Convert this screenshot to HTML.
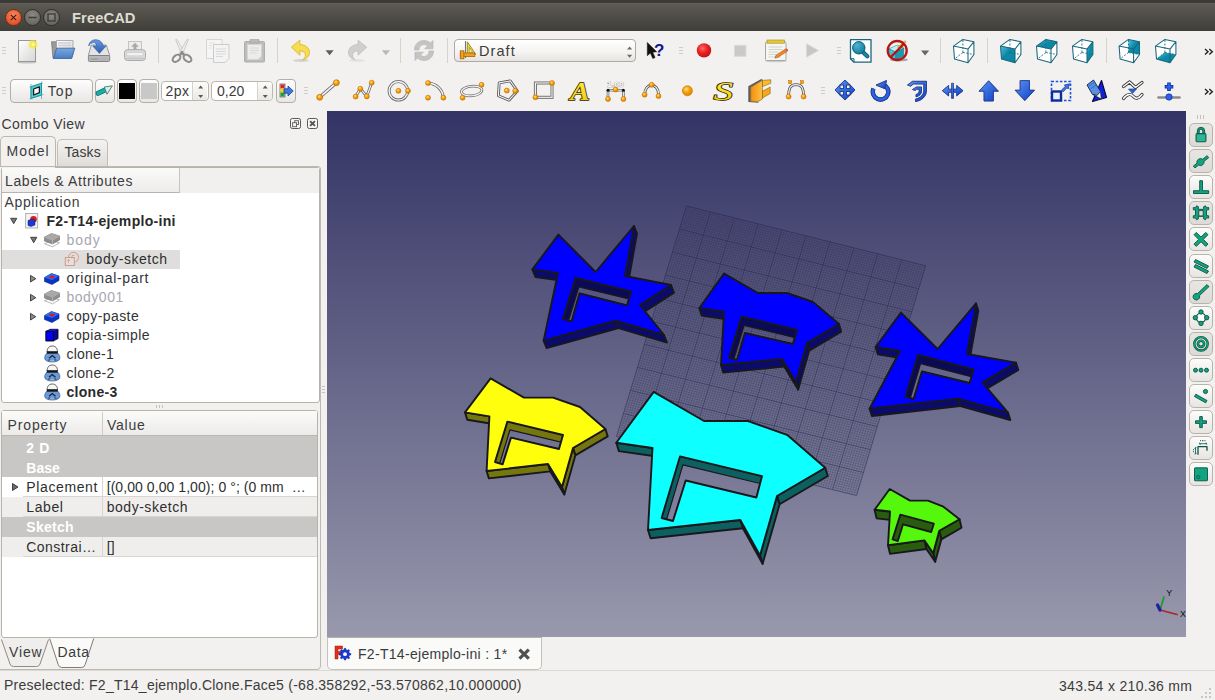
<!DOCTYPE html>
<html lang="en">
<head>
<meta charset="utf-8">
<title>FreeCAD</title>
<style>
*{box-sizing:border-box;margin:0;padding:0}
html,body{width:1215px;height:700px;overflow:hidden;background:#f2f1f0}
body{position:relative;font-family:"Liberation Sans","DejaVu Sans",sans-serif;font-size:14px;color:#3c3c3c}
.abs{position:absolute}
.t{position:absolute;white-space:nowrap;line-height:1}
#titlebar{left:0;top:0;width:1215px;height:31px;background:linear-gradient(#3b3a36 0,#3b3a36 2.500px,#65635b 3px,#5b5952 4.500px,#403f3a 30px,#3c3b37 31px)}
.wb{position:absolute;top:9px;width:17px;height:17px;border-radius:50%;border:1px solid #2e2d29}
.btn{position:absolute;border:1px solid #b3aea6;border-radius:4px;background:linear-gradient(#fdfdfd,#e9e7e4)}
.sep{position:absolute;width:1px;height:25px;background:#d6d3cd}
.grip{position:absolute;width:4px;height:9px;background:repeating-linear-gradient(#d0cdc8 0,#d0cdc8 1px,transparent 1px,transparent 3px)}
.ic{position:absolute;overflow:visible}
.frame{position:absolute;border:1px solid #b7b2aa;border-radius:3px;background:#fff}
.row{position:absolute;left:0;height:19px;line-height:19px;white-space:nowrap;font-size:14.5px}
.tri{position:absolute;width:0;height:0}
.sbtn{position:absolute;left:1189px;width:24px;height:24px;border:1px solid #b8b3ab;border-radius:5px;background:linear-gradient(#fcfcfb,#e7e5e2)}
.sbtn.on{background:linear-gradient(#e8e6e3,#dddad6)}
</style>
</head>
<body>
<div id="titlebar" class="abs">
  <div class="wb" style="left:5px;background:radial-gradient(circle at 50% 35%,#f58b62,#e3532b 70%);border-color:#7a2a12"></div>
  <div class="wb" style="left:24px;background:radial-gradient(circle at 50% 35%,#8d8a82,#6b6962 70%)"></div>
  <div class="wb" style="left:43px;background:radial-gradient(circle at 50% 35%,#8d8a82,#6b6962 70%)"></div>
  <svg class="ic" style="left:5px;top:9px" width="56" height="17" viewBox="0 0 56 17">
    <path d="M5.8 5.8l5.4 5.4M11.2 5.8l-5.4 5.4" stroke="#4e1808" stroke-width="1.200" fill="none"/>
    <path d="M23.5 8.5h8" stroke="#3b3a36" stroke-width="1.5"/>
    <rect x="43" y="5" width="7" height="7" fill="none" stroke="#3b3a36" stroke-width="1.3"/>
  </svg>
  <div class="t" style="left:72px;top:11px;font-size:14.7px;font-weight:bold;color:#dfdbd2;letter-spacing:.1px">FreeCAD</div>
</div>
<!-- toolbar row 1 -->
<div class="grip" style="left:2px;top:47px"></div>
<div class="sep" style="left:158px;top:38px"></div>
<div class="sep" style="left:277px;top:38px"></div>
<div class="sep" style="left:400px;top:38px"></div>
<div class="sep" style="left:447px;top:38px"></div>
<div class="grip" style="left:679px;top:47px"></div>
<div class="grip" style="left:837px;top:47px"></div>
<div class="sep" style="left:940px;top:38px"></div>
<div class="sep" style="left:987px;top:38px"></div>
<div class="sep" style="left:1106px;top:38px"></div>
<div class="btn" style="left:454px;top:39px;width:182px;height:23px;border-color:#aea9a1;background:linear-gradient(#fff,#f4f3f2 60%,#e6e4e1)"></div>
<div class="t" style="left:479px;top:43.500px;font-size:14.500px;color:#3c3c3c;letter-spacing:1.07px">Draft</div>
<svg class="ic" style="left:0;top:31px" width="1215" height="40" viewBox="0 31 1215 40">
<defs>
  <linearGradient id="gpage" x1="0" y1="0" x2="1" y2="1"><stop offset="0" stop-color="#fff"/><stop offset="1" stop-color="#d6d6d6"/></linearGradient>
  <radialGradient id="gglow"><stop offset="0" stop-color="#fffde0"/><stop offset=".45" stop-color="#f7e93a"/><stop offset="1" stop-color="#f7e93a" stop-opacity="0"/></radialGradient>
  <linearGradient id="gblue" x1="0" y1="0" x2="0" y2="1"><stop offset="0" stop-color="#7aa7de"/><stop offset="1" stop-color="#4a7fc4"/></linearGradient>
  <linearGradient id="gblue2" x1="0" y1="0" x2="0" y2="1"><stop offset="0" stop-color="#6a9ae0"/><stop offset="1" stop-color="#2c5cae"/></linearGradient>
  <linearGradient id="gteal" x1="0" y1="0" x2="1" y2="1"><stop offset="0" stop-color="#5cc4e6"/><stop offset=".5" stop-color="#0a8aa8"/><stop offset="1" stop-color="#08809c"/></linearGradient>
  <radialGradient id="gred" cx=".4" cy=".35" r=".7"><stop offset="0" stop-color="#ff6a6a"/><stop offset=".5" stop-color="#e82020"/><stop offset="1" stop-color="#c01010"/></radialGradient>
  <radialGradient id="gmag" cx=".35" cy=".3" r=".8"><stop offset="0" stop-color="#4fb3d4"/><stop offset="1" stop-color="#0b7896"/></radialGradient>
</defs>
<!-- new -->
<ellipse cx="27" cy="62.3" rx="10" ry="1.2" fill="#000" opacity=".18"/>
<rect x="18.5" y="40.5" width="17" height="21" fill="url(#gpage)" stroke="#989898"/>
<circle cx="33" cy="44.5" r="5.5" fill="url(#gglow)"/>
<!-- open -->
<path d="M51.500 41.800h6l1.500 1.500H72V58H53z" fill="#9a9a9a" stroke="#7a7a7a" stroke-width=".8"/>
<path d="M56.500 40.500h16.500v14h-16.500z" fill="url(#gpage)" stroke="#9c9c9c" stroke-width=".8"/>
<path d="M58 43h13M58 45.500h13" stroke="#cfcfcf" stroke-width="1.400"/>
<path d="M56.700 48.200h18.100l-3.200 10.200H53.300z" fill="url(#gblue)" stroke="#3a66a7" stroke-width=".9" stroke-linejoin="round"/>
<!-- save -->
<path d="M91.300 45h15l3.400 10.500H88.300z" fill="#e4e4e4" stroke="#8e8e8e" stroke-width=".9"/>
<rect x="88.400" y="55.500" width="21.300" height="6" rx="1.200" fill="#b9b9b9" stroke="#7c7c7c" stroke-width=".9"/>
<path d="M90.500 59h8" stroke="#8d8d8d" stroke-width="1"/><path d="M101 57.500v3M103 57.500v3M105 57.500v3M107 57.500v3" stroke="#a5a5a5" stroke-width=".7"/>
<path d="M88.800 46c.2-4.500 4.200-6.700 7.700-6.200 4 .5 6.500 3.200 6.500 6.200h3l-6.600 7.400-6.600-7.400h3.800c0-2-1.100-3.400-3.100-3.400-2.200 0-3.700 1.400-4.700 3.400z" fill="url(#gblue2)" stroke="#2a55a0" stroke-width=".6" stroke-linejoin="round"/>
<!-- print (disabled) -->
<g>
<rect x="128.500" y="41.500" width="13" height="10" fill="#ececec" stroke="#c4c4c4"/>
<path d="M135 42.800l3.800 4h-2.300v3h-3V46.800h-2.300z" fill="#a8a8a8"/>
<rect x="124.500" y="49.700" width="21" height="10.800" rx="3" fill="#dadada" stroke="#aaa"/>
<rect x="126.500" y="52.500" width="17" height="3.300" rx="1.500" fill="#f2f2f2" stroke="#c2c2c2" stroke-width=".6"/>
<path d="M125.500 58.500h19" stroke="#c4c4c4" stroke-width="1.500"/>
</g>
<!-- cut -->
<path d="M175.600 39.600h1.500l7.600 13.600-2.900 1.500z" fill="#ededed" stroke="#b4b4b4" stroke-width=".6" stroke-linejoin="round"/>
<path d="M188.400 39.600h-1.500l-7.600 13.600 2.900 1.500z" fill="#ededed" stroke="#b4b4b4" stroke-width=".6" stroke-linejoin="round"/>
<g fill="none" stroke="#8c8c8c" stroke-width="2.100">
<ellipse cx="176.500" cy="58.300" rx="4.400" ry="2.900" transform="rotate(-40 176.500 58.300)"/>
<ellipse cx="187.500" cy="58.300" rx="4.400" ry="2.900" transform="rotate(40 187.500 58.300)"/>
<path d="M180 55l2.600-3.200M184 55l-2.600-3.200" stroke-width="2.400"/>
</g>
<!-- copy (disabled) -->
<g opacity=".8">
<path d="M206.500 39.500h15.500v19h-15.500z" fill="#f7f7f7" stroke="#cfcfcf"/>
<path d="M213.500 44.500h15.500v14l-4 4h-11.500z" fill="#f4f4f4" stroke="#c4c4c4"/>
<path d="M216 49h10M216 51.500h10M216 54h10M216 56.500h7" stroke="#d4d4d4" stroke-width="1.200"/>
<path d="M209 43h6M209 45.500h3M209 48h3" stroke="#dcdcdc" stroke-width="1"/>
</g>
<!-- paste (disabled) -->
<g opacity=".85">
<rect x="244.500" y="41.500" width="20" height="20.500" rx="1" fill="#b4b4b4" stroke="#a2a2a2"/>
<rect x="247.500" y="44.500" width="14" height="15" fill="#ececec" stroke="#cfcfcf" stroke-width=".7"/>
<path d="M250 39.500h9v3.500h-9z" fill="#b0b0b0" stroke="#9a9a9a" stroke-width=".7"/>
<path d="M250 48h9M250 50.500h9M250 53h7" stroke="#d4d4d4" stroke-width="1.100"/>
<path d="M261.500 56v3.500h-3.500z" fill="#bdbdbd"/>
</g>
<!-- undo -->
<ellipse cx="301" cy="60.500" rx="8" ry="1.400" fill="#000" opacity=".13"/>
<path d="M291.300 47.200l8.600-7v4.300c5.600.3 9.600 3.400 9.600 8 0 3.600-2.800 6.300-6.700 7.300 1.700-1.500 2.700-3 2.700-4.800 0-2.600-2.200-4-5.600-4.100v4.300z" fill="#f6dc52" stroke="#d6b51c" stroke-width=".8" stroke-linejoin="round"/>
<path d="M325.500 50.300h8.200l-4.100 5z" fill="#606060"/>
<!-- redo (disabled) -->
<ellipse cx="357" cy="60.500" rx="8" ry="1.400" fill="#000" opacity=".06"/>
<path d="M366.700 47.200l-8.600-7v4.300c-5.600.3-9.600 3.400-9.600 8 0 3.600 2.800 6.300 6.700 7.300-1.700-1.500-2.700-3-2.700-4.800 0-2.600 2.200-4 5.600-4.100v4.300z" fill="#cfcfcf" stroke="#bdbdbd" stroke-width=".8" stroke-linejoin="round"/>
<path d="M381.800 50.300h8.200l-4.100 5z" fill="#b8b8b8"/>
<!-- refresh (disabled) -->
<g fill="#c4c4c4" stroke="#b2b2b2" stroke-width=".6">
<path d="M414.500 50c0-5.500 4-9.500 9.500-9.500 2.600 0 4.800.9 6.500 2.500l2.500-2.500v8.300h-8.300l2.900-2.900c-1-.9-2.200-1.400-3.600-1.400-3 0-5 2.300-5 5.500z"/>
<path d="M433.500 51c0 5.500-4 9.500-9.500 9.500-2.600 0-4.800-.9-6.500-2.500l-2.500 2.500v-8.300h8.300l-2.900 2.900c1 .9 2.200 1.400 3.600 1.400 3 0 5-2.300 5-5.500z"/>
</g>
<!-- draft wb icon -->
<path d="M467.300 41.800v12.500h8.500z" fill="#e8d44a" stroke="#8a7a18" stroke-width=".8"/>
<path d="M469.300 47.500v5h3.400z" fill="#f6f0b0" stroke="#8a7a18" stroke-width=".5"/>
<path d="M465.500 41v17" stroke="#777" stroke-width="1.100"/>
<rect x="460.300" y="53" width="14.500" height="3.600" fill="#f0a020" stroke="#a96508" stroke-width=".8"/>
<rect x="460.300" y="50.800" width="3.600" height="8" fill="#f0a020" stroke="#a96508" stroke-width=".8"/>
<path d="M627 49.500l2.600-3 2.600 3zM627 54.800l2.600 3 2.600-3z" fill="#6a6a6a"/>
<!-- whats this -->
<path d="M647.300 42.500v13.200l3.100-2.600 2.400 5.500 2.300-1-2.400-5.400 4-.4z" fill="#111" stroke="#111" stroke-width=".5" stroke-linejoin="round"/>
<text x="654" y="55.800" font-family="Liberation Sans, sans-serif" font-weight="bold" font-size="17" fill="#14148c">?</text>
<!-- record -->
<circle cx="704" cy="50.400" r="7.200" fill="url(#gred)"/>
<!-- stop disabled -->
<rect x="734.500" y="45.300" width="11.500" height="11" fill="#c9c9c9" stroke="#dadada" stroke-width="1"/>
<!-- macro edit -->
<ellipse cx="776" cy="61" rx="11" ry="1.300" fill="#000" opacity=".15"/>
<rect x="765.500" y="42" width="20.500" height="18.500" rx="1" fill="#f5f5f3" stroke="#a7a7a2"/>
<rect x="767" y="40" width="17.500" height="3.200" fill="#e6c93a" stroke="#a08918" stroke-width=".6"/>
<path d="M768.500 47h14M768.500 49.500h14M768.500 52h10M768.500 54.500h8M768.500 57h12" stroke="#c9c9c4" stroke-width=".8"/>
<path d="M776 55.200l9.300-6 1.600 2.300-9.300 6-2.700.6z" fill="#f08a24" stroke="#a8560c" stroke-width=".6"/>
<path d="M785.300 49.200l1.500-1 1.600 2.300-1.500 1z" fill="#e05050"/>
<!-- play disabled -->
<path d="M806.500 43.800v13.400l12-6.700z" fill="#c6c6c6" stroke="#d8d8d8" stroke-width=".8"/>
<!-- zoom fit -->
<path d="M850.500 39.700h20.500v22.500h-17l-3.500-3.500z" fill="#fff" stroke="#17667d" stroke-width="1.300" stroke-linejoin="round"/>
<path d="M850.500 58.700h3.500v3.500" fill="none" stroke="#17667d" stroke-width="1"/>
<path d="M863 52.300l4.300 4" stroke="#0e5a72" stroke-width="4.200" stroke-linecap="round"/><path d="M863 52.300l4.300 4" stroke="#1a88a8" stroke-width="2.400" stroke-linecap="round"/>
<circle cx="858.800" cy="47.800" r="6.200" fill="url(#gmag)" stroke="#0e5a72" stroke-width="1"/>
<!-- draw style -->
<ellipse cx="899" cy="59.800" rx="9" ry="1.700" fill="#000" opacity=".3"/>
<path d="M889 48.800l8.200-3.700 6.700 3-8.200 4z" fill="#c4f0f2" stroke="#1f8f9c" stroke-width=".6" stroke-linejoin="round"/>
<path d="M889 48.800l6.700 3.300v7.800l-6.200-3.700z" fill="#3cc8d8" stroke="#1f8f9c" stroke-width=".6" stroke-linejoin="round"/>
<path d="M895.700 52.100l8.200-4-.3 8.100-7.900 3.700z" fill="#1a9aac" stroke="#127a8a" stroke-width=".6" stroke-linejoin="round"/>
<path d="M897.500 47l7.500-6.300 1.300 1.200-7.300 6.300z" fill="#ecd040" stroke="#8a6d10" stroke-width=".4"/>
<circle cx="897.200" cy="50.500" r="9.500" fill="none" stroke="#b81414" stroke-width="2.300"/>
<path d="M890.600 57.200l13.300-13.300" stroke="#b81414" stroke-width="2.300"/>
<path d="M921 50.600h8.200l-4.100 5z" fill="#666"/>
<!-- >> -->
<path d="M1205 49l3 2.700-3 2.700M1209.300 49l3 2.700-3 2.700" fill="none" stroke="#222" stroke-width="1.400"/>
</svg>
<svg class="ic" style="left:0;top:31px" width="1215" height="40" viewBox="0 31 1215 40">
<defs><linearGradient id="gcf" x1="0" y1="0" x2="1" y2="1"><stop offset="0" stop-color="#58c0e2"/><stop offset=".45" stop-color="#0b8aa8"/><stop offset="1" stop-color="#0a86a3"/></linearGradient></defs>
<path d="M953.5 46.1L962.9 39.4L973.9 41.7L973.9 54.5L968.0 62.7L954.5 59.0Z" fill="#fff"/>
<path d="M962.9 52.5L962.9 39.4M962.9 52.5L973.9 54.5M962.9 52.5L954.5 59.0" fill="none" stroke="#1d6e84" stroke-width=".9" stroke-dasharray="2 1.5"/>
<path d="M953.5 46.1L968.0 49.1L968.0 62.7L954.5 59.0ZM953.5 46.1L962.9 39.4L973.9 41.7L968.0 49.1ZM973.9 41.7L973.9 54.5L968.0 62.7" fill="none" stroke="#1a667c" stroke-width="1.05" stroke-linejoin="round"/>
<path d="M1000.5 46.1L1009.9 39.4L1020.9 41.7L1020.9 54.5L1015.0 62.7L1001.5 59.0Z" fill="#fff"/>
<path d="M1000.5 46.1L1015.0 49.1L1015.0 62.7L1001.5 59.0Z" fill="url(#gcf)"/>
<path d="M1009.9 52.5L1009.9 39.4M1009.9 52.5L1020.9 54.5M1009.9 52.5L1001.5 59.0" fill="none" stroke="#1d6e84" stroke-width=".9" stroke-dasharray="2 1.5"/>
<path d="M1000.5 46.1L1015.0 49.1L1015.0 62.7L1001.5 59.0ZM1000.5 46.1L1009.9 39.4L1020.9 41.7L1015.0 49.1ZM1020.9 41.7L1020.9 54.5L1015.0 62.7" fill="none" stroke="#1a667c" stroke-width="1.05" stroke-linejoin="round"/>
<path d="M1036.5 46.1L1045.9 39.4L1056.9 41.7L1056.9 54.5L1051.0 62.7L1037.5 59.0Z" fill="#fff"/>
<path d="M1036.5 46.1L1051.0 49.1L1056.9 41.7L1045.9 39.4Z" fill="url(#gcf)"/>
<path d="M1045.9 52.5L1045.9 39.4M1045.9 52.5L1056.9 54.5M1045.9 52.5L1037.5 59.0" fill="none" stroke="#1d6e84" stroke-width=".9" stroke-dasharray="2 1.5"/>
<path d="M1036.5 46.1L1051.0 49.1L1051.0 62.7L1037.5 59.0ZM1036.5 46.1L1045.9 39.4L1056.9 41.7L1051.0 49.1ZM1056.9 41.7L1056.9 54.5L1051.0 62.7" fill="none" stroke="#1a667c" stroke-width="1.05" stroke-linejoin="round"/>
<path d="M1072.5 46.1L1081.9 39.4L1092.9 41.7L1092.9 54.5L1087.0 62.7L1073.5 59.0Z" fill="#fff"/>
<path d="M1087.0 49.1L1092.9 41.7L1092.9 54.5L1087.0 62.7Z" fill="url(#gcf)"/>
<path d="M1081.9 52.5L1081.9 39.4M1081.9 52.5L1092.9 54.5M1081.9 52.5L1073.5 59.0" fill="none" stroke="#1d6e84" stroke-width=".9" stroke-dasharray="2 1.5"/>
<path d="M1072.5 46.1L1087.0 49.1L1087.0 62.7L1073.5 59.0ZM1072.5 46.1L1081.9 39.4L1092.9 41.7L1087.0 49.1ZM1092.9 41.7L1092.9 54.5L1087.0 62.7" fill="none" stroke="#1a667c" stroke-width="1.05" stroke-linejoin="round"/>
<path d="M1119.1 46.1L1128.5 39.4L1139.5 41.7L1139.5 54.5L1133.6 62.7L1120.1 59.0Z" fill="#fff"/>
<path d="M1128.5 39.4L1139.5 41.7L1139.5 54.5L1128.5 52.5Z" fill="url(#gcf)"/>
<path d="M1128.5 52.5L1128.5 39.4M1128.5 52.5L1139.5 54.5M1128.5 52.5L1120.1 59.0" fill="none" stroke="#1d6e84" stroke-width=".9" stroke-dasharray="2 1.5"/>
<path d="M1119.1 46.1L1133.6 49.1L1133.6 62.7L1120.1 59.0ZM1119.1 46.1L1128.5 39.4L1139.5 41.7L1133.6 49.1ZM1139.5 41.7L1139.5 54.5L1133.6 62.7" fill="none" stroke="#1a667c" stroke-width="1.05" stroke-linejoin="round"/>
<path d="M1155.5 46.1L1164.9 39.4L1175.9 41.7L1175.9 54.5L1170.0 62.7L1156.5 59.0Z" fill="#fff"/>
<path d="M1156.5 59.0L1170.0 62.7L1175.9 54.5L1164.9 52.5Z" fill="url(#gcf)"/>
<path d="M1164.9 52.5L1164.9 39.4M1164.9 52.5L1175.9 54.5M1164.9 52.5L1156.5 59.0" fill="none" stroke="#1d6e84" stroke-width=".9" stroke-dasharray="2 1.5"/>
<path d="M1155.5 46.1L1170.0 49.1L1170.0 62.7L1156.5 59.0ZM1155.5 46.1L1164.9 39.4L1175.9 41.7L1170.0 49.1ZM1175.9 41.7L1175.9 54.5L1170.0 62.7" fill="none" stroke="#1a667c" stroke-width="1.05" stroke-linejoin="round"/>
</svg>
<!-- toolbar row 2 -->
<div class="grip" style="left:2px;top:87px"></div>
<div class="grip" style="left:304px;top:87px"></div>
<div class="grip" style="left:821px;top:87px"></div>
<div class="btn" style="left:10px;top:79px;width:83px;height:24px"></div>
<div class="t" style="left:47.800px;top:83.9px;font-size:14px;letter-spacing:1.061px">Top</div>
<div class="btn" style="left:95px;top:79px;width:20px;height:24px"></div>
<div class="btn" style="left:117px;top:79px;width:20px;height:24px"><div class="abs" style="left:1px;top:3px;width:16px;height:16px;background:#000"></div></div>
<div class="btn" style="left:139px;top:79px;width:20px;height:24px"><div class="abs" style="left:1px;top:3px;width:16px;height:16px;background:#c8c8c8"></div></div>
<div class="btn" style="left:161px;top:81px;width:47.500px;height:20px;background:#fff;border-color:#bbb6ae"></div>
<div class="abs" style="left:192px;top:82px;width:15px;height:18px;border-left:1px solid #d5d1cb;background:linear-gradient(#fbfbfa,#ebe9e6);border-radius:0 3px 3px 0"></div>
<div class="t" style="left:165.500px;top:84.4px;font-size:14px;letter-spacing:0.511px">2px</div>
<div class="btn" style="left:211px;top:81px;width:62px;height:20px;background:#fff;border-color:#bbb6ae"></div>
<div class="abs" style="left:257px;top:82px;width:15px;height:18px;border-left:1px solid #d5d1cb;background:linear-gradient(#fbfbfa,#ebe9e6);border-radius:0 3px 3px 0"></div>
<div class="t" style="left:217px;top:84.4px;font-size:14px;letter-spacing:0.05px">0,20</div>
<div class="btn" style="left:276px;top:79px;width:20px;height:24px"></div>
<svg class="ic" style="left:0;top:71px" width="1215" height="40" viewBox="0 71 1215 40">
<defs>
  <radialGradient id="gdot" cx=".4" cy=".35" r=".7"><stop offset="0" stop-color="#ffe09a"/><stop offset=".45" stop-color="#fba000"/><stop offset="1" stop-color="#d97f00"/></radialGradient>
  <linearGradient id="garr" x1="0" y1="0" x2="1" y2="1"><stop offset="0" stop-color="#5a96f0"/><stop offset="1" stop-color="#0e3cc8"/></linearGradient>
  <linearGradient id="gyel" x1="0" y1="0" x2="0" y2="1"><stop offset="0" stop-color="#fff04a"/><stop offset="1" stop-color="#f0c800"/></linearGradient>
  <linearGradient id="gor" x1="0" y1="0" x2="1" y2="0"><stop offset="0" stop-color="#f09010"/><stop offset="1" stop-color="#ffc040"/></linearGradient>
  <g id="dot"><circle r="3" fill="url(#gdot)" stroke="#b36b00" stroke-width=".6"/></g>
  <g id="dots"><circle r="2.500" fill="url(#gdot)" stroke="#b36b00" stroke-width=".5"/></g>
</defs>
<!-- Top plane icon -->
<path d="M31 84v15.500M41.500 81.500v17.500M29.500 87.200l13.500-4.300M29.500 98.900l14-4.400" stroke="#3aaab0" stroke-width=".7" fill="none"/>
<path d="M31 86.700l10.500-3.300v11.600l-10.500 3.400z" fill="#4fd0d6" stroke="#1f939a" stroke-width="1"/>
<path d="M33.600 89l5.800-2.100v5.700l-5.800 2.400z" fill="#fff" stroke="#1a1a1a" stroke-width="1.300" stroke-linejoin="round"/>
<!-- link arrow -->
<path d="M98.200 93.300l6.800-3.300" stroke="#0a6f6c" stroke-width="5" stroke-linecap="round"/>
<path d="M98.200 93.300l6.800-3.300" stroke="#14b0aa" stroke-width="3.600" stroke-linecap="round"/>
<path d="M104.300 87l8.100-1.200-5.400 8.500z" fill="#cdf2ea" stroke="#56736d" stroke-width=".9" stroke-linejoin="round"/>
<!-- spin arrows -->
<path d="M198.200 88.500l2.500-3 2.500 3zM198.200 95l2.500 3 2.500-3zM262.700 88.500l2.500-3 2.500 3zM262.700 95l2.500 3 2.500-3z" fill="#5a5a5a"/>
<!-- construction/apply style icon -->
<rect x="280" y="84" width="5" height="13" fill="#e8e8e8" stroke="#555" stroke-width=".7"/>
<rect x="280.500" y="84.500" width="4" height="4" fill="#e02020"/><rect x="280.500" y="88.500" width="4" height="4" fill="#f0d020"/><rect x="280.500" y="92.500" width="4" height="4" fill="#20a030"/>
<path d="M284 88.800h4v-2.800l5.200 5-5.200 5v-2.800h-4z" fill="#3a7ae0" stroke="#1a3f9a" stroke-width=".8" stroke-linejoin="round"/>
<!-- line -->
<path d="M319.700 97.300L336.400 82.700" stroke="#6a6a6a" stroke-width="3.400" stroke-linecap="round"/><path d="M319.700 97.300L336.400 82.700" stroke="#f4f4f4" stroke-width="1.700"/>
<use href="#dot" x="319.700" y="97.300"/><use href="#dot" x="336.400" y="82.700"/>
<!-- wire -->
<path d="M355.600 96.600L360.300 88.700L366.800 96.400L371.700 82.700" fill="none" stroke="#6a6a6a" stroke-width="2.800" stroke-linejoin="round"/><path d="M355.600 96.600L360.300 88.700L366.800 96.400L371.700 82.700" fill="none" stroke="#f4f4f4" stroke-width="1.200"/>
<use href="#dots" x="355.600" y="96.600"/><use href="#dots" x="360.300" y="88.700"/><use href="#dots" x="366.800" y="96.400"/><use href="#dots" x="371.700" y="82.700"/>
<!-- circle -->
<circle cx="398.400" cy="90.800" r="9.300" fill="none" stroke="#6a6a6a" stroke-width="3"/><circle cx="398.400" cy="90.800" r="9.300" fill="none" stroke="#f4f4f4" stroke-width="1.400"/>
<use href="#dots" x="398.400" y="90.800"/><use href="#dots" x="408" y="90.800"/>
<!-- arc -->
<path d="M428 83c8 .5 14.500 6 15.400 14.700" fill="none" stroke="#6a6a6a" stroke-width="3"/><path d="M428 83c8 .5 14.500 6 15.400 14.700" fill="none" stroke="#f4f4f4" stroke-width="1.400"/>
<use href="#dots" x="428" y="83"/><use href="#dots" x="428" y="97.700"/><use href="#dots" x="443.400" y="97.700"/>
<!-- ellipse -->
<ellipse cx="471.700" cy="91" rx="10.300" ry="4.800" transform="rotate(-6 471.700 91)" fill="none" stroke="#6a6a6a" stroke-width="2.600"/><ellipse cx="471.700" cy="91" rx="10.300" ry="4.800" transform="rotate(-6 471.700 91)" fill="none" stroke="#f4f4f4" stroke-width="1.200"/>
<use href="#dots" x="462.600" y="97.700"/><use href="#dots" x="481.500" y="84.800"/>
<!-- polygon -->
<path d="M510.200 80.900l7.200 10.100-8.400 9.200-10.600-4.400.8-12.900z" fill="none" stroke="#555" stroke-width="2.800" stroke-linejoin="round"/><path d="M510.200 80.900l7.200 10.100-8.400 9.200-10.600-4.400.8-12.900z" fill="none" stroke="#f4f4f4" stroke-width="1.100" stroke-linejoin="round"/>
<use href="#dots" x="506.800" y="90.600"/><use href="#dots" x="515.200" y="90.900"/>
<!-- rectangle -->
<rect x="535.400" y="83" width="16.600" height="14.300" fill="none" stroke="#6a6a6a" stroke-width="3"/><rect x="535.400" y="83" width="16.600" height="14.300" fill="none" stroke="#f0f0f0" stroke-width="1.200"/>
<use href="#dots" x="535.400" y="97.300"/><use href="#dots" x="552" y="83"/>
<!-- text A -->
<text x="570.300" y="99.600" font-family="Liberation Serif, serif" font-style="italic" font-weight="bold" font-size="26" fill="url(#gyel)" stroke="#2a2200" stroke-width="1.500" paint-order="stroke" textLength="19.500" lengthAdjust="spacingAndGlyphs">A</text>
<!-- dimension -->
<path d="M608 90v9M623.400 90v9M608 90.300h15.400" stroke="#6e6e6e" stroke-width="2.600" fill="none"/><path d="M608 90v9M623.400 90v9M608 90.300h15.400" stroke="#f2f2f2" stroke-width="1" fill="none"/>
<circle cx="608" cy="90.200" r="1.500" fill="#111"/><circle cx="623.400" cy="90.200" r="1.500" fill="#111"/>
<text x="607.300" y="87" font-family="Liberation Sans, sans-serif" font-weight="bold" font-size="8" fill="#fff" stroke="#8a8a8a" stroke-width=".7" paint-order="stroke" textLength="16.500" lengthAdjust="spacingAndGlyphs">1.00</text>
<use href="#dots" x="608" y="99"/><use href="#dots" x="623.400" y="99"/><use href="#dots" x="615.600" y="89.500"/>
<!-- bspline -->
<path d="M644.600 95c0-13 14-13 14 0" fill="none" stroke="#555" stroke-width="2.800"/><path d="M644.600 95c0-13 14-13 14 0" fill="none" stroke="#f0f0f0" stroke-width="1.200"/>
<use href="#dots" x="644.600" y="94.700"/><use href="#dots" x="651.600" y="84.800"/><use href="#dots" x="658.500" y="96"/>
<!-- point -->
<circle cx="687.400" cy="90.800" r="5" fill="url(#gdot)" stroke="#c07000" stroke-width=".6"/>
<!-- S shape string -->
<text x="713.500" y="100" font-family="Liberation Serif, serif" font-style="italic" font-size="25" fill="url(#gyel)" stroke="#2a2200" stroke-width="1.400" paint-order="stroke" textLength="19.500" lengthAdjust="spacingAndGlyphs">S</text>
<!-- facebinder -->
<path d="M748.3 86.3L761.2 79.0L762.9 80.1L750.7 87.3L750.7 101.3L758.0 101.7L758.6 102.7L748.3 102.1Z" fill="#5c5c5c"/>
<g stroke="#6a5210" stroke-width=".5" stroke-linejoin="round"><path d="M750.7 87.3L762.5 80.3L762.5 98.9L758.0 101.7L750.7 101.3Z" fill="url(#gor)"/>
<path d="M762.5 80.3L770.8 79.8L770.8 83.3L763.3 86.3L762.5 86.3Z" fill="#fcbc28"/>
<path d="M762.5 90.8L763.3 90.8L770.2 87.1L770.2 93.6L762.5 97.9Z" fill="#f6a818"/></g>
<!-- bezier -->
<path d="M788.600 96.600c0-9 2-12 7.500-12s7.500 3 7.500 12" fill="none" stroke="#555" stroke-width="2.800"/><path d="M788.600 96.600c0-9 2-12 7.500-12s7.500 3 7.500 12" fill="none" stroke="#f0f0f0" stroke-width="1.200"/>
<rect x="788.700" y="80.700" width="3" height="3" fill="#fba000" stroke="#b36b00" stroke-width=".5"/><rect x="800.500" y="80.700" width="3" height="3" fill="#fba000" stroke="#b36b00" stroke-width=".5"/>
<use href="#dots" x="788.600" y="96.600"/><use href="#dots" x="803.600" y="96.600"/>
<!-- move -->
<g fill="url(#garr)" stroke="#14308c" stroke-width=".7" stroke-linejoin="round" style="filter:drop-shadow(.7px .8px .5px rgba(0,0,30,.55))">
<path d="M845 80L850.200 85H846.500V88.500H850V84.800L855 90L850 95.200V91.500H846.500V95H850.200L845 100L839.800 95H843.500V91.500H840V95.200L835 90L840 84.800V88.500H843.500V85H839.800Z"/>
<!-- rotate -->
<path d="M883 84.500A7.700 7.700 0 1 1 873.500 88.700" fill="none" stroke="#14308c" stroke-width="4.300"/>
<path d="M883 84.500A7.700 7.700 0 1 1 873.500 88.700" fill="none" stroke="#2c62e0" stroke-width="2.900"/>
<path d="M886.500 80.500l-10.500 4.600 8.800 3.600z"/>
<!-- offset -->
<path d="M907.500 85l5-3.700h14v9c0 6-4.500 10.300-11 11.300v-2.500c5-1 8.300-4.300 8.300-8.800v-6.300h-10.500l-2.600 2.200z"/>
<path d="M912.500 89.500l4-2.500h5v4c0 3-2 5-5.500 5.800v-2.300c2-.6 3.200-1.800 3.200-3.500v-1.800h-2.500l-1.700 1.300z"/>
<!-- trimex -->
<path d="M942.300 90.700l6.300-5.200v3.700h3.400v3h-3.400v3.700zM963 90.700l-6.300-5.200v3.700h-3.200v3h3.200v3.700z"/>
<rect x="951.500" y="83.300" width="2" height="15" stroke-width=".5"/>
<!-- upgrade -->
<path d="M988.700 80.800l9.700 10.400h-5v9.800h-9.400v-9.800h-5z"/>
<!-- downgrade -->
<path d="M1024.800 100.600l9.700-10.400h-5v-9.600h-9.400v9.600h-5z"/>
</g>
<!-- scale -->
<rect x="1051.500" y="81.500" width="19" height="19" fill="none" stroke="#1a50e0" stroke-width="1.600" stroke-dasharray="2.500 1.700"/>
<rect x="1052" y="91.500" width="9" height="9" fill="#e8eefc" stroke="#0e2c9c" stroke-width="2.400"/>
<path d="M1061.500 90l4-3.700-1.200-1.200 5.200-1.300-1.300 5.200-1.200-1.200-3.800 4z" fill="#3a78e8" stroke="#14308c" stroke-width=".7" stroke-linejoin="round"/>
<!-- edit -->
<path d="M1101.500 80.500l5 17-14 4z" fill="#1020e0" stroke="#0a0a40" stroke-width="1.200" stroke-linejoin="round"/>
<path d="M1087 85l6.500-5 7 11.500-3.500 4-4.500-1z" fill="#5a90e0" stroke="#12306c" stroke-width="1" stroke-linejoin="round"/>
<path d="M1093 94.500l4 1 3.500-4 .8 7.500z" fill="#f4f4f4" stroke="#222" stroke-width=".7" stroke-linejoin="round"/>
<path d="M1089 86l6-4M1091 88.500l6-4" stroke="#2a58b0" stroke-width=".7"/>
<!-- wire to bspline -->
<path d="M1123.500 86.500l6-4.500 6 5.500 6.500-5" fill="none" stroke="#333" stroke-width="3.200" stroke-linejoin="round" stroke-linecap="round"/><path d="M1123.500 86.500l6-4.500 6 5.500 6.500-5" fill="none" stroke="#fff" stroke-width="1.500" stroke-linejoin="round" stroke-linecap="round"/>
<path d="M1123.500 98.500c4-5.500 8-4.500 10-2s5 2.500 8.500-2" fill="none" stroke="#333" stroke-width="3.200" stroke-linecap="round"/><path d="M1123.500 98.500c4-5.500 8-4.500 10-2s5 2.500 8.500-2" fill="none" stroke="#fff" stroke-width="1.500" stroke-linecap="round"/>
<path d="M1128.500 89h8l-4 4.500z" fill="#2a68e0" stroke="#14308c" stroke-width=".6"/>
<!-- add point -->
<path d="M1158.500 97.500h21" stroke="#8a8a8a" stroke-width="2.600" stroke-linecap="round"/>
<circle cx="1169" cy="97" r="3.200" fill="#2a60f0" stroke="#0e2c9c" stroke-width=".7"/>
<path d="M1169 82.500v8.500M1164.700 86.700h8.600" stroke="#0e2c9c" stroke-width="3.600"/><path d="M1169 83.300v6.900M1165.500 86.700h7" stroke="#2a60f0" stroke-width="2"/>
<path d="M1205 89l3 2.700-3 2.700M1209.300 89l3 2.700-3 2.700" fill="none" stroke="#222" stroke-width="1.400"/>
</svg>
<!-- left panel -->
<div class="t" style="left:1.5px;top:116.7px;font-size:14px;letter-spacing:0.453px">Combo View</div>
<svg class="ic" style="left:288px;top:116px" width="32" height="14" viewBox="288 116 32 14"><rect x="290.500" y="118.500" width="10" height="10" rx="1.800" fill="#f6f6f5" stroke="#5a5a5a"/><rect x="294.700" y="120.700" width="3.800" height="3.800" fill="none" stroke="#5a5a5a" stroke-width=".9"/><rect x="292.600" y="122.700" width="4" height="4" fill="#f6f6f5" stroke="#5a5a5a" stroke-width=".9"/><rect x="307.500" y="118.500" width="10" height="10" rx="1.800" fill="#f6f6f5" stroke="#5a5a5a"/><path d="M310.100 121.100l4.800 4.800M314.900 121.100l-4.800 4.800" stroke="#555" stroke-width="1.900"/></svg>
<div class="abs" style="left:57px;top:139px;width:51px;height:27px;border:1px solid #c2bdb5;border-bottom:none;border-radius:5px 5px 0 0;background:linear-gradient(#f4f3f1,#dfdcd8)"></div>
<div class="frame" style="left:1px;top:167px;width:318.500px;height:236px;border-radius:3px"></div>
<div class="abs" style="left:0;top:136px;width:56px;height:31px;border:1px solid #bcb7af;border-bottom:none;border-radius:5px 5px 0 0;background:#f2f1f0"></div>
<div class="abs" style="left:1px;top:166px;width:54px;height:2px;background:#f2f1f0"></div>
<div class="t" style="left:6.500px;top:143.8px;font-size:14px;letter-spacing:0.99px">Model</div>
<div class="t" style="left:64.500px;top:144.7px;font-size:14px;letter-spacing:0.101px">Tasks</div>
<div class="abs" style="left:2px;top:168px;width:316.500px;height:24.500px;background:#f1f0ef"></div>
<div class="abs" style="left:2px;top:168px;width:178px;height:24.500px;background:linear-gradient(#fafaf9,#edecea);border-right:1px solid #c9c5be;border-bottom:1px solid #b9b5ae"></div>
<div class="t" style="left:5px;top:173.5px;font-size:14px;letter-spacing:0.597px">Labels &amp; Attributes</div>
<div class="abs" style="left:2px;top:250px;width:178px;height:19px;background:#dfdedc"></div>
<div class="t" style="left:4.5px;top:195.1px;font-size:14px;color:#3c3c3c;letter-spacing:0.65px">Application</div>
<div class="t" style="left:46.5px;top:214.1px;font-size:14px;font-weight:bold;color:#2a2a2a;letter-spacing:0.312px">F2-T14-ejemplo-ini</div>
<div class="t" style="left:66.5px;top:233.1px;font-size:14px;color:#a7a7b2;letter-spacing:0.947px">body</div>
<div class="t" style="left:86.3px;top:252.1px;font-size:14px;color:#2e2e2e;letter-spacing:0.532px">body-sketch</div>
<div class="t" style="left:66.5px;top:271.1px;font-size:14px;color:#333;letter-spacing:0.664px">original-part</div>
<div class="t" style="left:66.5px;top:290.1px;font-size:14px;color:#a7a7b2;letter-spacing:0.497px">body001</div>
<div class="t" style="left:66.5px;top:309.1px;font-size:14px;color:#333;letter-spacing:0.413px">copy-paste</div>
<div class="t" style="left:66.5px;top:328.1px;font-size:14px;color:#333;letter-spacing:0.401px">copia-simple</div>
<div class="t" style="left:66.5px;top:347.1px;font-size:14px;color:#333;letter-spacing:0.23px">clone-1</div>
<div class="t" style="left:66.5px;top:366.1px;font-size:14px;color:#333;letter-spacing:0.313px">clone-2</div>
<div class="t" style="left:66.5px;top:385.1px;font-size:14px;font-weight:bold;color:#2a2a2a;letter-spacing:0.281px">clone-3</div>
<svg class="ic" style="left:0;top:210px" width="100" height="195" viewBox="0 210 100 195"><defs><linearGradient id="gbx" x1="0" y1="0" x2="1" y2="1"><stop offset="0" stop-color="#3a7af0"/><stop offset="1" stop-color="#0a2ab0"/></linearGradient><g id="ibody"><path d="M0 10.300l7-3.500 8 2.500-7 4z" fill="#fff" stroke="#9a9a9a" stroke-width=".7"/><path d="M0 3.500l7-3.500 8 2.500v4l-7 4-8-3z" fill="#8e8e8e" stroke="#6f6f6f" stroke-width=".6"/><path d="M0 3.500l8 3 7-4M8 6.500v4" fill="none" stroke="#c4c4c4" stroke-width=".7"/><path d="M0 3.500l7-3.500 8 2.500-7 4z" fill="#a9a9a9"/></g><g id="ipart"><path d="M0 4l7-4 7.500 2.500v4.500l-7 4-7.500-3z" fill="#0a34c4" stroke="#08237c" stroke-width=".6"/><path d="M0 4l7-4 7.500 2.500-7 4z" fill="#2a6cf4"/><path d="M4 3.800l3.300-1.900 3.600 1.200-3.300 1.900z" fill="#e01818"/></g><g id="iclone"><path d="M2.800 6c0-4 2-6 5.200-6s5.200 2 5.200 6z" fill="#f6f6f6" stroke="#3a3a3a" stroke-width=".8"/><path d="M2.300 7.300h11.400c1.800 2 2.300 4.300 1.600 6.200-1.600 1.800-4 2.500-7.300 2.500s-5.700-.7-7.300-2.500c-.7-1.900-.2-4.200 1.600-6.200z" fill="#6a9ada" stroke="#2c4672" stroke-width=".6"/><path d="M3.500 13c1.500 1.300 3 1.800 4.500 1.800s3-.5 4.500-1.800" fill="none" stroke="#a8c8f0" stroke-width="1"/><rect x="2.500" y="5.300" width="11" height="2.300" fill="#161616"/><path d="M4.800 12.200l3.200-2.700 3.200 2.700" fill="none" stroke="#16203a" stroke-width="1.200"/><path d="M3.800 14h2.200M10 14h2.200" stroke="#16203a" stroke-width="1"/></g></defs><path d="M10.600000000000001 218.3h6.200l-3.100 5.400z" fill="#777" stroke="#444" stroke-width="1" stroke-linejoin="round"/><path d="M30.6 237.3h6.200l-3.100 5.400z" fill="#777" stroke="#444" stroke-width="1" stroke-linejoin="round"/><path d="M30.5 275.4v6.600l5.300-3.300z" fill="#8a8a8a" stroke="#444" stroke-width="1" stroke-linejoin="round"/><path d="M30.5 294.4v6.600l5.300-3.300z" fill="#8a8a8a" stroke="#444" stroke-width="1" stroke-linejoin="round"/><path d="M30.5 313.4v6.600l5.300-3.300z" fill="#8a8a8a" stroke="#444" stroke-width="1" stroke-linejoin="round"/><rect x="25.700" y="213.500" width="12" height="14.500" fill="#f4f4f4" stroke="#a0a0a0" stroke-width=".8"/><circle cx="33.500" cy="219.300" r="3.300" fill="#e01818"/><path d="M28 220.500l4-1.500 3 1v5l-4 1.500-3-1z" fill="#1a3ad0" stroke="#0a1a70" stroke-width=".5"/><use href="#ibody" x="44.500" y="233.500"/><use href="#ibody" x="44.500" y="290.500"/><use href="#ipart" x="44.500" y="273.500"/><use href="#ipart" x="44.500" y="311.500"/><g fill="none" stroke="#d49a8a" stroke-width="1"><circle cx="73.500" cy="257.300" r="5"/><rect x="65.300" y="257.500" width="9" height="8" fill="#e3e1df"/><path d="M68.500 263v-3.500M67.300 261l1.200-1.500 1.200 1.500M72 255.500h2.500M72 255.500v3" stroke-width=".8"/></g><path d="M46 331.300l4.500-2h7.500v9.300l-4.500 2.200h-7.500z" fill="#0a0a8c" stroke="#06062c" stroke-width=".9" stroke-linejoin="round"/><path d="M46 331.300l4.500-2h7.500l-4.500 2z" fill="#1a1ad0"/><rect x="46" y="331.300" width="7.500" height="9.500" fill="#0000f4" stroke="#06062c" stroke-width=".9"/><use href="#iclone" x="44.300" y="346"/><use href="#iclone" x="44.300" y="365"/><use href="#iclone" x="44.300" y="384"/></svg>
<div class="abs" style="left:156px;top:405px;width:8px;height:3px;background:repeating-linear-gradient(90deg,#c4c0ba 0,#c4c0ba 1px,transparent 1px,transparent 3px)"></div>
<div class="abs" style="left:322px;top:386px;width:3px;height:8px;background:repeating-linear-gradient(#c4c0ba 0,#c4c0ba 1px,transparent 1px,transparent 3px)"></div>
<!-- property panel -->
<div class="frame" style="left:1px;top:409.500px;width:317px;height:228px"></div>
<div class="abs" style="left:2px;top:411px;width:315px;height:25px;background:linear-gradient(#fbfbfa,#ecebe9);border-bottom:1px solid #bbb7b0"></div>
<div class="abs" style="left:102px;top:412px;width:1px;height:23px;background:#cfcbc5"></div>
<div class="t" style="left:7.500px;top:418.1px;font-size:14px;letter-spacing:0.883px">Property</div>
<div class="t" style="left:107px;top:418.1px;font-size:14px;letter-spacing:0.73px">Value</div>
<div class="abs" style="left:2px;top:436px;width:315px;height:41px;background:#c9c7c5"></div>
<div class="abs" style="left:2px;top:517px;width:315px;height:20px;background:#c9c7c5"></div>
<div class="abs" style="left:2px;top:477px;width:315px;height:20px;background:#fff"></div>
<div class="abs" style="left:2px;top:497px;width:315px;height:20px;background:#efeeed"></div>
<div class="abs" style="left:2px;top:537px;width:315px;height:20px;background:#efeeed"></div>
<div class="abs" style="left:23px;top:496px;width:294px;height:1px;background:#d9d6d2"></div>
<div class="abs" style="left:23px;top:516px;width:294px;height:1px;background:#d9d6d2"></div>
<div class="abs" style="left:23px;top:556px;width:294px;height:1px;background:#d9d6d2"></div>
<div class="abs" style="left:102px;top:477px;width:1px;height:20px;background:#d9d6d2"></div>
<div class="abs" style="left:102px;top:497px;width:1px;height:20px;background:#d9d6d2"></div>
<div class="abs" style="left:102px;top:537px;width:1px;height:20px;background:#d9d6d2"></div>
<div class="t" style="left:26.3px;top:440.5px;font-size:14px;font-weight:bold;color:#fff;letter-spacing:0.602px">2 D</div>
<div class="t" style="left:26.3px;top:460.6px;font-size:14px;font-weight:bold;color:#fff;letter-spacing:0.044px">Base</div>
<div class="t" style="left:26.3px;top:520.4px;font-size:14px;font-weight:bold;color:#fff;letter-spacing:0.256px">Sketch</div>
<div class="t" style="left:26.3px;top:480.4px;font-size:14px;color:#2e2e2e;letter-spacing:0.618px">Placement</div>
<div class="t" style="left:26.3px;top:500.4px;font-size:14px;color:#2e2e2e;letter-spacing:0.584px">Label</div>
<div class="t" style="left:26.3px;top:540.3px;font-size:14px;color:#2e2e2e;letter-spacing:0.445px">Constrai…</div>
<div class="t" style="left:106.7px;top:480.4px;font-size:14px;color:#2e2e2e;letter-spacing:0.064px">[(0,00 0,00 1,00); 0 °; (0 mm &nbsp;…</div>
<div class="t" style="left:106.7px;top:500.4px;font-size:14px;color:#2e2e2e;letter-spacing:0.532px">body-sketch</div>
<div class="t" style="left:106.7px;top:540.3px;font-size:14px;color:#2e2e2e;letter-spacing:0.219px">[]</div>
<svg class="ic" style="left:10px;top:480px" width="12" height="14" viewBox="10 480 12 14"><path d="M12.500 483.500v7l5.500-3.500z" fill="#6a6a6a" stroke="#3e3e3e" stroke-width="1" stroke-linejoin="round"/></svg>
<svg class="ic" style="left:0;top:636px" width="330" height="36" viewBox="0 636 330 36"><path d="M1.500 639.500l8.500 24.500q.8 2.500 3.500 2.500h23q2.700 0 3.500-2.500l8.500-24.500" fill="#efeeec" stroke="#8f8b85" stroke-width="1"/><path d="M49.700 638.500l8.500 26q.8 3 3.500 3h20q2.700 0 3.500-3l8.500-26" fill="#fafaf9" stroke="#7f7b75" stroke-width="1"/></svg>
<div class="t" style="left:9px;top:644.8px;font-size:14px;letter-spacing:0.869px">View</div>
<div class="t" style="left:57.5px;top:645.3px;font-size:14px;letter-spacing:0.641px">Data</div>
<svg width="859" height="526" viewBox="0 0 859 526" style="position:absolute;left:327px;top:111px">
<defs><linearGradient id="bgg" x1="0" y1="0" x2="0" y2="1"><stop offset="0" stop-color="#333365"/><stop offset="1" stop-color="#9898ad"/></linearGradient></defs>
<rect width="859" height="526" fill="url(#bgg)"/>
<path d="M361.9 95.6L291.9 326.1M358.8 97.3L597.9 157.1M364.3 96.2L294.3 326.7M358.1 99.6L597.2 159.4M366.7 96.8L296.7 327.3M357.4 101.9L596.5 161.7M369.1 97.4L299.1 327.9M356.7 104.2L595.8 164.0M371.5 98.0L301.5 328.4M356.0 106.5L595.1 166.3M373.8 98.6L303.9 329.0M355.3 108.8L594.5 168.6M376.2 99.2L306.3 329.6M354.6 111.1L593.8 170.9M378.6 99.8L308.7 330.2M353.9 113.4L593.1 173.2M381.0 100.4L311.1 330.8M353.2 115.7L592.4 175.5M385.8 101.6L315.9 332.0M351.8 120.4L591.0 180.1M388.2 102.2L318.3 332.6M351.1 122.7L590.3 182.4M390.6 102.8L320.7 333.2M350.4 125.0L589.6 184.7M393.0 103.4L323.1 333.8M349.7 127.3L588.9 187.0M395.4 104.0L325.5 334.4M349.0 129.6L588.2 189.3M397.8 104.6L327.9 334.9M348.3 131.9L587.5 191.6M400.1 105.2L330.3 335.5M347.6 134.2L586.9 193.8M402.5 105.8L332.7 336.1M346.9 136.5L586.2 196.1M404.9 106.4L335.1 336.7M346.2 138.8L585.5 198.4M409.7 107.6L339.9 337.9M344.8 143.4L584.1 203.0M412.1 108.2L342.3 338.5M344.1 145.7L583.4 205.3M414.5 108.8L344.7 339.1M343.4 148.0L582.7 207.6M416.9 109.4L347.1 339.7M342.7 150.3L582.0 209.9M419.3 109.9L349.5 340.2M342.0 152.6L581.3 212.2M421.7 110.5L351.9 340.8M341.3 154.9L580.6 214.5M424.1 111.1L354.3 341.4M340.6 157.2L579.9 216.8M426.4 111.7L356.7 342.0M339.9 159.5L579.3 219.1M428.8 112.3L359.1 342.6M339.2 161.8L578.6 221.4M433.6 113.5L363.9 343.8M337.8 166.5L577.2 226.0M436.0 114.1L366.3 344.4M337.1 168.8L576.5 228.3M438.4 114.7L368.7 345.0M336.4 171.1L575.8 230.6M440.8 115.3L371.1 345.6M335.7 173.4L575.1 232.9M443.2 115.9L373.5 346.1M335.0 175.7L574.4 235.2M445.6 116.5L375.9 346.7M334.3 178.0L573.7 237.5M448.0 117.1L378.3 347.3M333.6 180.3L573.0 239.8M450.4 117.7L380.7 347.9M332.9 182.6L572.3 242.1M452.7 118.3L383.1 348.5M332.2 184.9L571.7 244.4M457.5 119.5L387.9 349.7M330.8 189.5L570.3 249.0M459.9 120.1L390.3 350.3M330.1 191.8L569.6 251.3M462.3 120.7L392.7 350.9M329.4 194.1L568.9 253.6M464.7 121.3L395.1 351.5M328.7 196.4L568.2 255.9M467.1 121.9L397.5 352.1M328.0 198.7L567.5 258.2M469.5 122.5L399.9 352.6M327.3 201.0L566.8 260.5M471.9 123.1L402.3 353.2M326.6 203.3L566.1 262.8M474.3 123.7L404.7 353.8M325.9 205.6L565.4 265.1M476.7 124.3L407.1 354.4M325.2 207.9L564.7 267.4M481.4 125.5L411.9 355.6M323.8 212.6L563.4 271.9M483.8 126.1L414.3 356.2M323.1 214.9L562.7 274.2M486.2 126.7L416.7 356.8M322.4 217.2L562.0 276.5M488.6 127.3L419.1 357.4M321.7 219.5L561.3 278.8M491.0 127.9L421.5 357.9M321.0 221.8L560.6 281.1M493.4 128.5L423.9 358.5M320.3 224.1L559.9 283.4M495.8 129.1L426.3 359.1M319.6 226.4L559.2 285.7M498.2 129.7L428.7 359.7M318.9 228.7L558.5 288.0M500.6 130.3L431.1 360.3M318.2 231.0L557.8 290.3M505.4 131.5L435.9 361.5M316.8 235.6L556.4 294.9M507.7 132.1L438.3 362.1M316.1 237.9L555.8 297.2M510.1 132.7L440.7 362.7M315.4 240.2L555.1 299.5M512.5 133.3L443.1 363.3M314.7 242.5L554.4 301.8M514.9 133.9L445.5 363.9M314.0 244.8L553.7 304.1M517.3 134.5L447.9 364.4M313.3 247.1L553.0 306.4M519.7 135.1L450.3 365.0M312.6 249.4L552.3 308.7M522.1 135.7L452.7 365.6M311.9 251.7L551.6 311.0M524.5 136.3L455.1 366.2M311.2 254.0L550.9 313.3M529.3 137.5L459.9 367.4M309.8 258.7L549.5 317.9M531.7 138.1L462.3 368.0M309.1 261.0L548.8 320.2M534.0 138.7L464.7 368.6M308.4 263.3L548.2 322.5M536.4 139.3L467.1 369.2M307.7 265.6L547.5 324.8M538.8 139.9L469.5 369.8M307.0 267.9L546.8 327.1M541.2 140.4L471.9 370.3M306.3 270.2L546.1 329.4M543.6 141.0L474.3 370.9M305.6 272.5L545.4 331.7M546.0 141.6L476.7 371.5M304.9 274.8L544.7 334.0M548.4 142.2L479.1 372.1M304.2 277.1L544.0 336.3M553.2 143.4L483.9 373.3M302.8 281.7L542.6 340.9M555.6 144.0L486.3 373.9M302.1 284.0L541.9 343.2M558.0 144.6L488.7 374.5M301.4 286.3L541.2 345.5M560.3 145.2L491.1 375.1M300.7 288.6L540.6 347.7M562.7 145.8L493.5 375.6M300.0 290.9L539.9 350.0M565.1 146.4L495.9 376.2M299.3 293.2L539.2 352.3M567.5 147.0L498.3 376.8M298.6 295.5L538.5 354.6M569.9 147.6L500.7 377.4M297.9 297.8L537.8 356.9M572.3 148.2L503.1 378.0M297.2 300.1L537.1 359.2M577.1 149.4L507.9 379.2M295.8 304.8L535.7 363.8M579.5 150.0L510.3 379.8M295.1 307.1L535.0 366.1M581.9 150.6L512.7 380.4M294.4 309.4L534.3 368.4M584.3 151.2L515.1 381.0M293.7 311.7L533.6 370.7M586.6 151.8L517.5 381.6M293.0 314.0L533.0 373.0M589.0 152.4L519.9 382.1M292.3 316.3L532.3 375.3M591.4 153.0L522.3 382.7M291.6 318.6L531.6 377.6M593.8 153.6L524.7 383.3M290.9 320.9L530.9 379.9M596.2 154.2L527.1 383.9M290.2 323.2L530.2 382.2" stroke="#2a2a4c" stroke-opacity=".4" stroke-width=".6" fill="none"/><path d="M359.5 95.0L289.5 325.5M359.5 95.0L598.6 154.8M383.4 101.0L313.5 331.4M352.5 118.1L591.7 177.8M407.3 107.0L337.5 337.3M345.5 141.1L584.8 200.7M431.2 112.9L361.5 343.2M338.5 164.1L577.9 223.7M455.1 118.9L385.5 349.1M331.5 187.2L571.0 246.7M479.0 124.9L409.5 355.0M324.5 210.2L564.0 269.6M503.0 130.9L433.5 360.9M317.5 233.3L557.1 292.6M526.9 136.9L457.5 366.8M310.5 256.4L550.2 315.6M550.8 142.8L481.5 372.7M303.5 279.4L543.3 338.6M574.7 148.8L505.5 378.6M296.5 302.5L536.4 361.5M598.6 154.8L529.5 384.5M289.5 325.5L529.5 384.5" stroke="#26264a" stroke-opacity=".62" stroke-width=".9" fill="none"/>
<g stroke="#18181c" stroke-width="1.9" stroke-linejoin="round"><g fill="#0b0b6e"><path d="M307 115 L298 165 L301 172.6 L310 122.6Z"/><path d="M344 174 L313 194 L316 201.6 L347 181.6Z"/><path d="M337 224 L288.6 209.6 L291.6 217.2 L340 231.6Z"/><path d="M288.6 209.6 L216.6 229.6 L219.6 237.2 L291.6 217.2Z"/><path d="M231 162 L205.4 158.4 L208.4 166 L234 169.6Z"/></g><clipPath id="hc0"><path d="M248.6 167 L304 180.4 L300 194.4 L252.6 182.4 L244.6 210.4 L236 208Z"/></clipPath><path clip-path="url(#hc0)" fill-rule="evenodd" d="M248.6 167 L304 180.4 L300 194.4 L252.6 182.4 L244.6 210.4 L236 208ZM251.9 175.8 L307.3 189.2 L303.3 203.2 L255.9 191.2 L247.9 219.2 L239.3 216.8Z" fill="#0a0a56" stroke-width="1.2"/><path fill-rule="evenodd" d="M231.4 123.6 L268.6 161 L307 115 L298 165 L344 174 L313 194 L337 224 L288.6 209.6 L216.6 229.6 L231 162 L205.4 158.4ZM248.6 167 L304 180.4 L300 194.4 L252.6 182.4 L244.6 210.4 L236 208Z" fill="#0000ff"/></g>
<g stroke="#18181c" stroke-width="1.9" stroke-linejoin="round"><g fill="#0b0b6e"><path d="M512 213 L480 232 L482.2 239.6 L514.2 220.6Z"/><path d="M480 232 L469 271 L471.2 278.6 L482.2 239.6Z"/><path d="M469 271 L455 248 L457.2 255.6 L471.2 278.6Z"/><path d="M455 248 L394 254 L396.2 261.6 L457.2 255.6Z"/><path d="M397 200.6 L372.4 197 L374.6 204.6 L399.2 208.2Z"/></g><clipPath id="hc1"><path d="M414.6 205.6 L470 219 L466 233 L418 222 L410 249 L402 247Z"/></clipPath><path clip-path="url(#hc1)" fill-rule="evenodd" d="M414.6 205.6 L470 219 L466 233 L418 222 L410 249 L402 247ZM417.1 214.4 L472.5 227.8 L468.5 241.8 L420.5 230.8 L412.5 257.8 L404.5 255.8Z" fill="#0a0a56" stroke-width="1.2"/><path fill-rule="evenodd" d="M397 162.6 L431 182 L460 182 L486 191 L512 213 L480 232 L469 271 L455 248 L394 254 L397 200.6 L372.4 197ZM414.6 205.6 L470 219 L466 233 L418 222 L410 249 L402 247Z" fill="#0000ff"/></g>
<g stroke="#18181c" stroke-width="1.9" stroke-linejoin="round"><g fill="#0b0b6e"><path d="M649 192.4 L640 243 L642.3 250.4 L651.3 199.8Z"/><path d="M689 251.6 L655.4 271.6 L657.7 279 L691.3 259Z"/><path d="M681 301.6 L631 287.6 L633.3 295 L683.3 309Z"/><path d="M631 287.6 L542.6 297.6 L544.9 305 L633.3 295Z"/><path d="M573 240 L548.6 236 L550.9 243.4 L575.3 247.4Z"/></g><clipPath id="hc2"><path d="M591 244 L646.6 258.4 L642.6 272 L595 260.4 L586.6 288 L578.6 285.6Z"/></clipPath><path clip-path="url(#hc2)" fill-rule="evenodd" d="M591 244 L646.6 258.4 L642.6 272 L595 260.4 L586.6 288 L578.6 285.6ZM593.6 252.6 L649.2 267 L645.2 280.6 L597.6 269 L589.2 296.6 L581.2 294.2Z" fill="#0a0a56" stroke-width="1.2"/><path fill-rule="evenodd" d="M574 201.6 L610.6 238 L649 192.4 L640 243 L689 251.6 L655.4 271.6 L681 301.6 L631 287.6 L542.6 297.6 L573 240 L548.6 236ZM591 244 L646.6 258.4 L642.6 272 L595 260.4 L586.6 288 L578.6 285.6Z" fill="#0000ff"/></g>
<g stroke="#18181c" stroke-width="1.9" stroke-linejoin="round"><g fill="#76760f"><path d="M278.4 318 L246 337 L248.3 344.4 L280.7 325.4Z"/><path d="M246 337 L235 376 L237.3 383.4 L248.3 344.4Z"/><path d="M235 376 L221 353 L223.3 360.4 L237.3 383.4Z"/><path d="M221 353 L159.6 360 L161.9 367.4 L223.3 360.4Z"/><path d="M162.4 305.4 L138 301.4 L140.3 308.8 L164.7 312.8Z"/></g><clipPath id="hc3"><path d="M180.4 310.6 L236 324 L232 338 L184 326.6 L175.6 353.4 L168 351Z"/></clipPath><path clip-path="url(#hc3)" fill-rule="evenodd" d="M180.4 310.6 L236 324 L232 338 L184 326.6 L175.6 353.4 L168 351ZM183 318.8 L238.6 332.2 L234.6 346.2 L186.6 334.8 L178.2 361.6 L170.6 359.2Z" fill="#76760f" stroke-width="1.2"/><path fill-rule="evenodd" d="M163.6 267.4 L197 286.6 L226 286.6 L253 296 L278.4 318 L246 337 L235 376 L221 353 L159.6 360 L162.4 305.4 L138 301.4ZM180.4 310.6 L236 324 L232 338 L184 326.6 L175.6 353.4 L168 351Z" fill="#ffff0d"/></g>
<g stroke="#18181c" stroke-width="1.9" stroke-linejoin="round"><g fill="#0d6060"><path d="M498.2 356.7 L450 385 L452.6 393.3 L500.8 365Z"/><path d="M450 385 L433 444.5 L435.6 452.8 L452.6 393.3Z"/><path d="M433 444.5 L413.3 409 L415.9 417.3 L435.6 452.8Z"/><path d="M413.3 409 L321 419 L323.6 427.3 L415.9 417.3Z"/><path d="M325.5 337 L289.3 331.8 L291.9 340.1 L328.1 345.3Z"/></g><clipPath id="hc4"><path d="M353 345.4 L435 365.2 L429.4 386.5 L358.7 369.5 L346 410 L334.6 407Z"/></clipPath><path clip-path="url(#hc4)" fill-rule="evenodd" d="M353 345.4 L435 365.2 L429.4 386.5 L358.7 369.5 L346 410 L334.6 407ZM355.9 353.9 L437.9 373.7 L432.3 395 L361.6 378 L348.9 418.5 L337.5 415.5Z" fill="#0d6060" stroke-width="1.2"/><path fill-rule="evenodd" d="M326.7 280.9 L377 310 L421 310 L460.6 324.2 L498.2 356.7 L450 385 L433 444.5 L413.3 409 L321 419 L325.5 337 L289.3 331.8ZM353 345.4 L435 365.2 L429.4 386.5 L358.7 369.5 L346 410 L334.6 407Z" fill="#0dffff"/></g>
<g stroke="#18181c" stroke-width="1.9" stroke-linejoin="round"><g fill="#2a5c10"><path d="M632.5 408.2 L612.3 419.8 L614.3 428.4 L634.5 416.8Z"/><path d="M612.3 419.8 L606.2 442.2 L608.2 450.8 L614.3 428.4Z"/><path d="M606.2 442.2 L597.4 429.4 L599.4 438 L608.2 450.8Z"/><path d="M597.4 429.4 L561 434.3 L563 442.9 L599.4 438Z"/><path d="M563 400.5 L547.6 398.8 L549.6 407.4 L565 409.1Z"/></g><clipPath id="hc5"><path d="M573.3 403.7 L606.8 412.7 L604.2 421 L576 413.3 L570.8 430 L565.6 428.4Z"/></clipPath><path d="M573.3 403.7 L606.8 412.7 L604.2 421 L576 413.3 L570.8 430 L565.6 428.4Z" fill="#2a5c10" stroke="none"/><path fill-rule="evenodd" d="M562.7 378 L583 389.6 L601 389.6 L616.4 395.7 L632.5 408.2 L612.3 419.8 L606.2 442.2 L597.4 429.4 L561 434.3 L563 400.5 L547.6 398.8ZM573.3 403.7 L606.8 412.7 L604.2 421 L576 413.3 L570.8 430 L565.6 428.4Z" fill="#55f70d"/></g>
<g stroke-width="1.8" stroke-linecap="round"><line x1="833" y1="499" x2="850" y2="503.5" stroke="#a82828"/><line x1="833" y1="499" x2="837" y2="486" stroke="#209a30"/><line x1="833" y1="499" x2="830.5" y2="494" stroke="#2020a0" stroke-width="3.2"/></g><g font-family="Liberation Sans, sans-serif" font-size="9" fill="#111"><text x="839.3" y="485.20000000000005">Y</text><text x="853" y="505.79999999999995">X</text></g>
</svg><!-- right snap toolbar -->
<div class="abs" style="left:1197px;top:115px;width:8px;height:4px;background:repeating-linear-gradient(90deg,#c4c0ba 0,#c4c0ba 1px,transparent 1px,transparent 3px)"></div>
<div class="sbtn on" style="top:123.0px"></div>
<div class="sbtn on" style="top:149.1px"></div>
<div class="sbtn" style="top:175.2px"></div>
<div class="sbtn on" style="top:201.3px"></div>
<div class="sbtn" style="top:227.4px"></div>
<div class="sbtn" style="top:253.5px"></div>
<div class="sbtn on" style="top:279.6px"></div>
<div class="sbtn" style="top:305.7px"></div>
<div class="sbtn on" style="top:331.8px"></div>
<div class="sbtn" style="top:357.9px"></div>
<div class="sbtn" style="top:384.0px"></div>
<div class="sbtn" style="top:410.1px"></div>
<div class="sbtn" style="top:436.2px"></div>
<div class="sbtn" style="top:462.3px"></div>
<svg class="ic" style="left:1189px;top:123px" width="24" height="366" viewBox="0 0 24 366"><g fill="#12a37f" stroke="#0b5442" stroke-width=".9" stroke-linejoin="round"><g transform="translate(0 0.0)"><path d="M8.300 10.500v-2.500a3.700 3.700 0 0 1 7.400 0v2.500h-1.900v-2.500a1.800 1.800 0 0 0-3.600 0v2.500z"/><rect x="7" y="10.500" width="10" height="8.300" rx=".8"/><path d="M8 13h8M8 15h8M8 17h8" stroke="#7fd9c2" stroke-width=".6"/></g><g transform="translate(0 26.1)"><path d="M4.300 17l1.700 1.800 3.600-2.800a3.600 3.600 0 0 0 5.400-3.800l4.700-3.600-1.600-2-4.500 3.600a3.600 3.600 0 0 0-5.600 3.900z"/></g><g transform="translate(0 52.2)"><path d="M10.700 5.500h2.800v10h6.200v2.800h-15.200v-2.800h6.200z"/></g><g transform="translate(0 78.3)"><path d="M7.500 4.500l2 1 -.3 2.500h5.600l-.3-2.500 2-1 1 2 2.200-.3v2.300l-2.200.3v5.400l2.200.3v2.300l-2.200-.3-1 2-2-1 .3-2.500h-5.600l.3 2.500-2 1-1-2-2.200.3v-2.300l2.200-.3v-5.400l-2.200-.3v-2.300l2.200.3zM9.800 9.300v5.400h4.400v-5.400z" fill-rule="evenodd"/></g><g transform="translate(0 104.4)"><path d="M5 7.300l2.300-2.300 4.700 4.700 4.700-4.700 2.300 2.300-4.700 4.700 4.700 4.700-2.300 2.300-4.700-4.700-4.700 4.700-2.300-2.300 4.700-4.700z"/></g><g transform="translate(0 130.5)"><path d="M5 8.500l1.500-2.500 13 6.500-1.500 2.500zM5 13.500l1.500-2.500 13 6.500-1.500 2.500z"/></g><g transform="translate(0 156.6)"><path d="M8.500 14l9.500-9 2 2-9.500 9a3.300 3.300 0 1 1-2-2z"/></g><g transform="translate(0 182.7)"><circle cx="12" cy="12" r="4.600" fill="#fff" stroke-width="1.300"/><circle cx="12" cy="6.300" r="2.200"/><circle cx="12" cy="17.700" r="2.200"/><circle cx="6.300" cy="12" r="2.200"/><circle cx="17.700" cy="12" r="2.200"/></g><g transform="translate(0 208.8)"><circle cx="12" cy="12" r="6.700" fill="none" stroke="#0b5442" stroke-width="2.400"/><circle cx="12" cy="12" r="6.700" fill="none" stroke="#12a37f" stroke-width="1.100"/><circle cx="12" cy="12" r="3.100" fill="none" stroke="#0b5442" stroke-width="2.600"/><circle cx="12" cy="12" r="3.100" fill="none" stroke="#12a37f" stroke-width="1.200"/></g><g transform="translate(0 234.9)"><circle cx="6.500" cy="12.300" r="2"/><circle cx="12" cy="12.300" r="2"/><circle cx="17.500" cy="12.300" r="2"/></g><g transform="translate(0 261.0)"><path d="M5.500 12.500l1.300-2.300 11.200 6.300-1.300 2.300z"/><circle cx="16.500" cy="7.500" r="2.100"/></g><g transform="translate(0 287.1)"><path d="M10.700 6.500h2.600v4.200h4.200v2.600h-4.200v4.200h-2.600v-4.200h-4.200v-2.600h4.200z"/></g><g transform="translate(0 313.2)"><path d="M9 18.500v-8h9v4" fill="none" stroke="#0b5442" stroke-width="1.300"/><path d="M6.500 11v7M7.500 11.500l-2 .8M7.500 17l-2 .8M10 7.500h8M10.500 6.500l.8 2M17 6.500l.8 2" fill="none" stroke="#0b5442" stroke-width=".8"/><path d="M11 4.500h1M13 4.500h1.500M15.500 4.500h1M4.500 13v1M4.500 15v1" stroke="#0b5442" stroke-width="1"/></g><g transform="translate(0 339.3)"><rect x="5.500" y="5.500" width="13" height="13" rx=".6"/><circle cx="9.300" cy="14.700" r="1.600" fill="none" stroke-width=".8"/></g></g></svg>
<!-- outer pane frame of combo view -->
<div class="abs" style="left:-1px;top:165.500px;width:322px;height:504px;border:1px solid #bdb8b0;border-radius:0 3px 4px 0;pointer-events:none"></div>
<!-- mdi tab -->
<div class="abs" style="left:327px;top:637px;width:215px;height:32.500px;border:1px solid #c6c2bb;border-top:1px solid #b4b1ab;border-radius:0 0 5px 5px;background:#fafaf9"></div>
<svg class="ic" style="left:332px;top:644px" width="20" height="18" viewBox="332 644 20 18">
<path d="M335 646h7.500v3h-4.500v2.500h3.500v2.800h-3.500v4.700h-3z" fill="#e0301a" stroke="#a01808" stroke-width=".5"/>
<path d="M344.300 648.300l1.400 0 .4 1.500 1.200.5 1.400-.8 1 1-.8 1.400.5 1.200 1.500.4v1.400l-1.500.4-.5 1.200.8 1.400-1 1-1.400-.8-1.200.5-.4 1.500h-1.400l-.4-1.500-1.200-.5-1.400.8-1-1 .8-1.400-.5-1.200-1.500-.4v-1.400l1.500-.4.5-1.200-.8-1.400 1-1 1.400.8 1.200-.5z" fill="#1a3ad8" stroke="#0a1a80" stroke-width=".4"/>
<circle cx="345" cy="654.200" r="1.900" fill="#fafaf9"/>
</svg>
<div class="t" style="left:358px;top:647.1px;font-size:14px;color:#3c3c3c;letter-spacing:0.305px">F2-T14-ejemplo-ini : 1*</div>
<svg class="ic" style="left:516px;top:646px" width="16" height="16" viewBox="516 646 16 16"><path d="M519.500 649.700l9.300 9M528.800 649.700l-9.300 9" stroke="#505050" stroke-width="3.200"/></svg>
<!-- status bar -->
<div class="abs" style="left:0;top:670px;width:1215px;height:1px;background:#dcd9d4"></div>
<div class="t" style="left:4px;top:678.1px;font-size:14px;color:#3c3c3c;letter-spacing:0.258px">Preselected: F2_T14_ejemplo.Clone.Face5 (-68.358292,-53.570862,10.000000)</div>
<div class="t" style="left:1059px;top:679.1px;font-size:14px;color:#3c3c3c;letter-spacing:0.315px">343.54 x 210.36 mm</div>
<svg class="ic" style="left:1199px;top:686px" width="14" height="14" viewBox="0 0 14 14"><g fill="#c9c6c0"><rect x="10" y="2" width="2" height="2"/><rect x="10" y="6" width="2" height="2"/><rect x="6" y="6" width="2" height="2"/><rect x="10" y="10" width="2" height="2"/><rect x="6" y="10" width="2" height="2"/><rect x="2" y="10" width="2" height="2"/></g></svg>
</body>
</html>
